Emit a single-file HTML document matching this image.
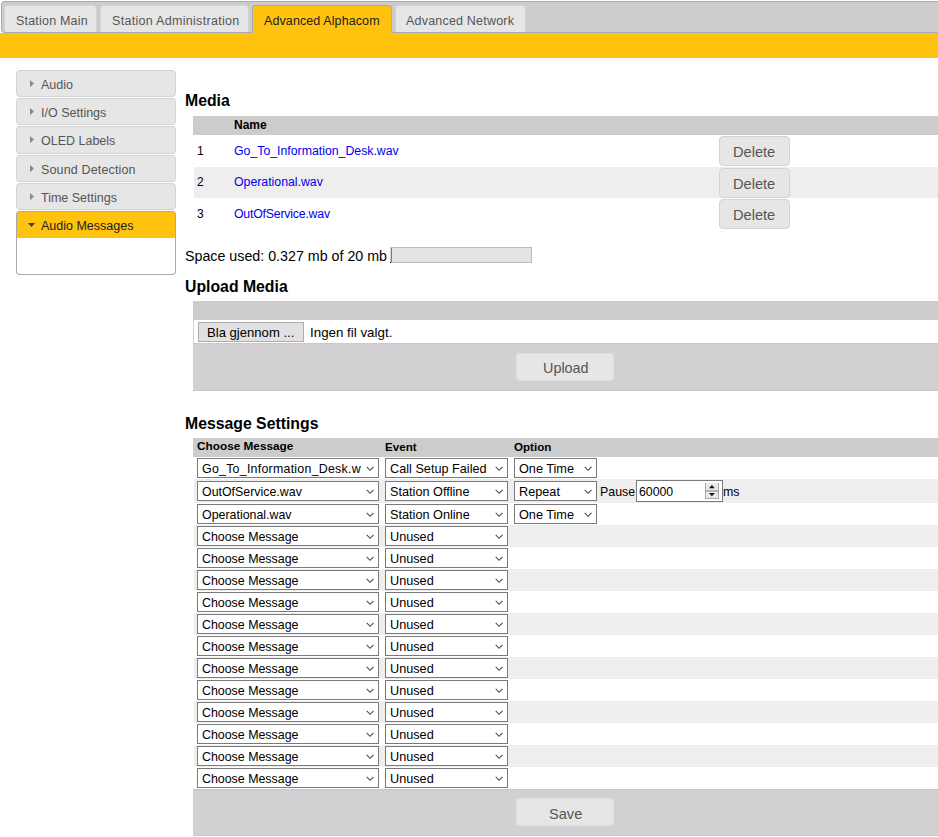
<!DOCTYPE html>
<html><head><meta charset="utf-8">
<style>
*{margin:0;padding:0;box-sizing:border-box}
html,body{width:938px;height:837px;overflow:hidden;background:#fff;font-family:"Liberation Sans",sans-serif;color:#000}
.a{position:absolute}
.t{position:absolute;white-space:nowrap;line-height:1}
#nav{left:1px;top:1px;width:960px;height:32px;background:#ccc;border:1px solid #aaa;border-bottom-color:#a6acb8;border-radius:4px}
.tab{position:absolute;top:5px;height:27px;background:#e6e6e6;border:1px solid #d3d3d3;border-bottom:0;border-radius:4px 4px 0 0;color:#555;font-size:12.5px;letter-spacing:.2px}
.tab span{position:absolute;top:9px;line-height:1;white-space:nowrap}
.tab.act{background:#ffc20f;border-color:#a6acb8;color:#212121;height:29px;border-radius:3px 3px 0 0}
#ybar{left:0;top:33px;width:938px;height:25px;background:#ffc20f}
.acc{position:absolute;left:16px;width:160px;height:27px;background:#e6e6e6;border:1px solid #d3d3d3;border-radius:4px;color:#555;font-size:12.5px}
.acc span{position:absolute;left:24px;top:8px;line-height:1;white-space:nowrap}
.acc svg{position:absolute;left:13px;top:9px}
.acc.act{background:#ffc20f;border-color:#aaa;border-bottom:0;color:#212121;border-radius:4px 4px 0 0}
.acc.act svg{left:11px;top:11px}
h2{position:absolute;font-size:15.8px;font-weight:bold;line-height:1;white-space:nowrap}
.btn{position:absolute;background:#e6e6e6;border:1px solid #d3d3d3;border-radius:4px;color:#555;font-size:14px}
.btn span{position:absolute;line-height:1;white-space:nowrap}
.sel{position:absolute;height:20px;background:#fff;border:1px solid #7a7a7a;color:#000;overflow:hidden}
.sel span{position:absolute;left:4px;top:4px;line-height:1;white-space:nowrap}
.sel svg{position:absolute;left:168px;top:7px}
.hd{position:absolute;left:193px;width:760px;background:#ccc}
.th{position:absolute;font-weight:bold;font-size:11.8px;line-height:1;white-space:nowrap}
.lnk{position:absolute;color:#0000ee;font-size:12.3px;line-height:1;white-space:nowrap}
.num{position:absolute;font-size:12px;line-height:1}
</style></head><body>
<div id="nav" class="a"></div>
<div class="tab" style="left:4px;width:93px"><span style="left:11px">Station Main</span></div>
<div class="tab" style="left:100px;width:149px"><span style="left:11px;letter-spacing:.3px">Station Administration</span></div>
<div class="tab act" style="left:252px;width:140px"><span style="left:11px;letter-spacing:.1px">Advanced Alphacom</span></div>
<div class="tab" style="left:395px;width:131px"><span style="left:10px">Advanced Network</span></div>
<div id="ybar" class="a"></div>

<div class="acc" style="top:70px"><svg width="5" height="8" viewBox="0 0 5 8"><path d="M0 0 L4 3.6 L0 7.2 Z" fill="#888"/></svg><span>Audio</span></div>
<div class="acc" style="top:98px"><svg width="5" height="8" viewBox="0 0 5 8"><path d="M0 0 L4 3.6 L0 7.2 Z" fill="#888"/></svg><span>I/O Settings</span></div>
<div class="acc" style="top:126px;height:28px"><svg width="5" height="8" viewBox="0 0 5 8"><path d="M0 0 L4 3.6 L0 7.2 Z" fill="#888"/></svg><span>OLED Labels</span></div>
<div class="acc" style="top:155px"><svg width="5" height="8" viewBox="0 0 5 8"><path d="M0 0 L4 3.6 L0 7.2 Z" fill="#888"/></svg><span style="letter-spacing:.15px">Sound Detection</span></div>
<div class="acc" style="top:183px"><svg width="5" height="8" viewBox="0 0 5 8"><path d="M0 0 L4 3.6 L0 7.2 Z" fill="#888"/></svg><span>Time Settings</span></div>
<div class="acc act" style="top:211px;height:27px"><svg width="8" height="5" viewBox="0 0 8 5"><path d="M0 0 L7 0 L3.5 4 Z" fill="#333b52"/></svg><span style="top:8px">Audio Messages</span></div>
<div class="a" style="left:16px;top:238px;width:160px;height:37px;border:1px solid #aaa;border-top:0;border-radius:0 0 4px 4px"></div>

<h2 style="left:185px;top:93px">Media</h2>
<div class="hd" style="top:116px;height:19px"></div>
<div class="th" style="left:234px;top:119px;font-size:12px">Name</div>
<div class="a" style="left:194px;top:167px;width:760px;height:31px;background:#eee"></div>
<div class="num" style="left:197px;top:145px">1</div>
<div class="num" style="left:197px;top:176px">2</div>
<div class="num" style="left:197px;top:208px">3</div>
<div class="lnk" style="left:234px;top:145px">Go_To_Information_Desk.wav</div>
<div class="lnk" style="left:234px;top:176px">Operational.wav</div>
<div class="lnk" style="left:234px;top:208px;letter-spacing:-.2px">OutOfService.wav</div>
<div class="btn" style="left:719px;top:136px;width:71px;height:30px"><span style="left:13px;top:8px;font-size:14.6px">Delete</span></div>
<div class="btn" style="left:719px;top:168px;width:71px;height:30px"><span style="left:13px;top:8px;font-size:14.6px">Delete</span></div>
<div class="btn" style="left:719px;top:199px;width:71px;height:30px"><span style="left:13px;top:8px;font-size:14.6px">Delete</span></div>

<div class="t" style="left:185px;top:249px;font-size:14.25px">Space used: 0.327 mb of 20 mb</div>
<div class="a" style="left:390px;top:247px;width:142px;height:16px;background:#e4e4e4;border:1px solid #bbb;border-left-color:#d8d4d8;border-radius:1px"></div>
<div class="a" style="left:391px;top:248px;width:1px;height:14px;background:#2b3"></div>
<div class="a" style="left:390px;top:262px;width:1px;height:1px;background:#000"></div>

<h2 style="left:185px;top:279px">Upload Media</h2>
<div class="a" style="left:193px;top:301px;width:760px;height:90px;background:#d3d0d3;border-bottom:1px solid #c8c8c8"></div>
<div class="a" style="left:193px;top:343px;width:760px;height:1px;background:#c9c9c9"></div>
<div class="a" style="left:193px;top:301px;width:760px;height:19px;background:#ccc"></div>
<div class="a" style="left:194px;top:320px;width:760px;height:23px;background:#fff"></div>
<div class="a" style="left:198px;top:322px;width:106px;height:20px;background:#e1e1e1;border:1px solid #adadad"></div>
<div class="t" style="left:207px;top:326px;font-size:13.1px">Bla gjennom ...</div>
<div class="t" style="left:310px;top:326px;font-size:13.35px">Ingen fil valgt.</div>
<div class="btn" style="left:516px;top:353px;width:98px;height:28px;border-color:#dfdfdf;border-radius:3px"><span style="left:26px;top:7px;font-size:14.4px">Upload</span></div>

<h2 style="left:185px;top:415.5px">Message Settings</h2>
<div class="hd" style="top:438px;height:19px"></div>
<div class="th" style="left:197px;top:441px">Choose Message</div>
<div class="th" style="left:385px;top:441px;font-size:11.6px">Event</div>
<div class="th" style="left:514px;top:441px;font-size:11.6px">Option</div>
<div class="a" style="left:194px;top:479px;width:760px;height:24px;background:#eee"></div>
<div class="a" style="left:194px;top:525px;width:760px;height:22px;background:#eee"></div>
<div class="a" style="left:194px;top:569px;width:760px;height:22px;background:#eee"></div>
<div class="a" style="left:194px;top:613px;width:760px;height:22px;background:#eee"></div>
<div class="a" style="left:194px;top:657px;width:760px;height:22px;background:#eee"></div>
<div class="a" style="left:194px;top:701px;width:760px;height:22px;background:#eee"></div>
<div class="a" style="left:194px;top:745px;width:760px;height:22px;background:#eee"></div>
<div class="sel" style="left:197px;top:458px;width:182px"><span style="font-size:12.4px"><b style="font-weight:normal;letter-spacing:.25px;display:block;width:159px;overflow:hidden;padding-bottom:4px">Go_To_Information_Desk.wav</b></span><svg style="left:168px" width="10" height="6" viewBox="0 0 10 6"><path d="M0.7 0.9 L4.1 4.3 L7.5 0.9" fill="none" stroke="#4a4a4a" stroke-width="1.1"/></svg></div>
<div class="sel" style="left:385px;top:458px;width:123px"><span style="font-size:12.7px">Call Setup Failed</span><svg style="left:109px" width="10" height="6" viewBox="0 0 10 6"><path d="M0.7 0.9 L4.1 4.3 L7.5 0.9" fill="none" stroke="#4a4a4a" stroke-width="1.1"/></svg></div>
<div class="sel" style="left:514px;top:458px;width:83px"><span style="font-size:12.7px">One Time</span><svg style="left:69px" width="10" height="6" viewBox="0 0 10 6"><path d="M0.7 0.9 L4.1 4.3 L7.5 0.9" fill="none" stroke="#4a4a4a" stroke-width="1.1"/></svg></div>
<div class="sel" style="left:197px;top:481px;width:182px"><span style="font-size:12.4px">OutOfService.wav</span><svg style="left:168px" width="10" height="6" viewBox="0 0 10 6"><path d="M0.7 0.9 L4.1 4.3 L7.5 0.9" fill="none" stroke="#4a4a4a" stroke-width="1.1"/></svg></div>
<div class="sel" style="left:385px;top:481px;width:123px"><span style="font-size:12.7px">Station Offline</span><svg style="left:109px" width="10" height="6" viewBox="0 0 10 6"><path d="M0.7 0.9 L4.1 4.3 L7.5 0.9" fill="none" stroke="#4a4a4a" stroke-width="1.1"/></svg></div>
<div class="sel" style="left:514px;top:481px;width:83px"><span style="font-size:12.7px">Repeat</span><svg style="left:69px" width="10" height="6" viewBox="0 0 10 6"><path d="M0.7 0.9 L4.1 4.3 L7.5 0.9" fill="none" stroke="#4a4a4a" stroke-width="1.1"/></svg></div>
<div class="sel" style="left:197px;top:504px;width:182px"><span style="font-size:12.4px">Operational.wav</span><svg style="left:168px" width="10" height="6" viewBox="0 0 10 6"><path d="M0.7 0.9 L4.1 4.3 L7.5 0.9" fill="none" stroke="#4a4a4a" stroke-width="1.1"/></svg></div>
<div class="sel" style="left:385px;top:504px;width:123px"><span style="font-size:12.7px">Station Online</span><svg style="left:109px" width="10" height="6" viewBox="0 0 10 6"><path d="M0.7 0.9 L4.1 4.3 L7.5 0.9" fill="none" stroke="#4a4a4a" stroke-width="1.1"/></svg></div>
<div class="sel" style="left:514px;top:504px;width:83px"><span style="font-size:12.7px">One Time</span><svg style="left:69px" width="10" height="6" viewBox="0 0 10 6"><path d="M0.7 0.9 L4.1 4.3 L7.5 0.9" fill="none" stroke="#4a4a4a" stroke-width="1.1"/></svg></div>
<div class="sel" style="left:197px;top:526px;width:182px"><span style="font-size:12.4px">Choose Message</span><svg style="left:168px" width="10" height="6" viewBox="0 0 10 6"><path d="M0.7 0.9 L4.1 4.3 L7.5 0.9" fill="none" stroke="#4a4a4a" stroke-width="1.1"/></svg></div>
<div class="sel" style="left:385px;top:526px;width:123px"><span style="font-size:12.7px">Unused</span><svg style="left:109px" width="10" height="6" viewBox="0 0 10 6"><path d="M0.7 0.9 L4.1 4.3 L7.5 0.9" fill="none" stroke="#4a4a4a" stroke-width="1.1"/></svg></div>
<div class="sel" style="left:197px;top:548px;width:182px"><span style="font-size:12.4px">Choose Message</span><svg style="left:168px" width="10" height="6" viewBox="0 0 10 6"><path d="M0.7 0.9 L4.1 4.3 L7.5 0.9" fill="none" stroke="#4a4a4a" stroke-width="1.1"/></svg></div>
<div class="sel" style="left:385px;top:548px;width:123px"><span style="font-size:12.7px">Unused</span><svg style="left:109px" width="10" height="6" viewBox="0 0 10 6"><path d="M0.7 0.9 L4.1 4.3 L7.5 0.9" fill="none" stroke="#4a4a4a" stroke-width="1.1"/></svg></div>
<div class="sel" style="left:197px;top:570px;width:182px"><span style="font-size:12.4px">Choose Message</span><svg style="left:168px" width="10" height="6" viewBox="0 0 10 6"><path d="M0.7 0.9 L4.1 4.3 L7.5 0.9" fill="none" stroke="#4a4a4a" stroke-width="1.1"/></svg></div>
<div class="sel" style="left:385px;top:570px;width:123px"><span style="font-size:12.7px">Unused</span><svg style="left:109px" width="10" height="6" viewBox="0 0 10 6"><path d="M0.7 0.9 L4.1 4.3 L7.5 0.9" fill="none" stroke="#4a4a4a" stroke-width="1.1"/></svg></div>
<div class="sel" style="left:197px;top:592px;width:182px"><span style="font-size:12.4px">Choose Message</span><svg style="left:168px" width="10" height="6" viewBox="0 0 10 6"><path d="M0.7 0.9 L4.1 4.3 L7.5 0.9" fill="none" stroke="#4a4a4a" stroke-width="1.1"/></svg></div>
<div class="sel" style="left:385px;top:592px;width:123px"><span style="font-size:12.7px">Unused</span><svg style="left:109px" width="10" height="6" viewBox="0 0 10 6"><path d="M0.7 0.9 L4.1 4.3 L7.5 0.9" fill="none" stroke="#4a4a4a" stroke-width="1.1"/></svg></div>
<div class="sel" style="left:197px;top:614px;width:182px"><span style="font-size:12.4px">Choose Message</span><svg style="left:168px" width="10" height="6" viewBox="0 0 10 6"><path d="M0.7 0.9 L4.1 4.3 L7.5 0.9" fill="none" stroke="#4a4a4a" stroke-width="1.1"/></svg></div>
<div class="sel" style="left:385px;top:614px;width:123px"><span style="font-size:12.7px">Unused</span><svg style="left:109px" width="10" height="6" viewBox="0 0 10 6"><path d="M0.7 0.9 L4.1 4.3 L7.5 0.9" fill="none" stroke="#4a4a4a" stroke-width="1.1"/></svg></div>
<div class="sel" style="left:197px;top:636px;width:182px"><span style="font-size:12.4px">Choose Message</span><svg style="left:168px" width="10" height="6" viewBox="0 0 10 6"><path d="M0.7 0.9 L4.1 4.3 L7.5 0.9" fill="none" stroke="#4a4a4a" stroke-width="1.1"/></svg></div>
<div class="sel" style="left:385px;top:636px;width:123px"><span style="font-size:12.7px">Unused</span><svg style="left:109px" width="10" height="6" viewBox="0 0 10 6"><path d="M0.7 0.9 L4.1 4.3 L7.5 0.9" fill="none" stroke="#4a4a4a" stroke-width="1.1"/></svg></div>
<div class="sel" style="left:197px;top:658px;width:182px"><span style="font-size:12.4px">Choose Message</span><svg style="left:168px" width="10" height="6" viewBox="0 0 10 6"><path d="M0.7 0.9 L4.1 4.3 L7.5 0.9" fill="none" stroke="#4a4a4a" stroke-width="1.1"/></svg></div>
<div class="sel" style="left:385px;top:658px;width:123px"><span style="font-size:12.7px">Unused</span><svg style="left:109px" width="10" height="6" viewBox="0 0 10 6"><path d="M0.7 0.9 L4.1 4.3 L7.5 0.9" fill="none" stroke="#4a4a4a" stroke-width="1.1"/></svg></div>
<div class="sel" style="left:197px;top:680px;width:182px"><span style="font-size:12.4px">Choose Message</span><svg style="left:168px" width="10" height="6" viewBox="0 0 10 6"><path d="M0.7 0.9 L4.1 4.3 L7.5 0.9" fill="none" stroke="#4a4a4a" stroke-width="1.1"/></svg></div>
<div class="sel" style="left:385px;top:680px;width:123px"><span style="font-size:12.7px">Unused</span><svg style="left:109px" width="10" height="6" viewBox="0 0 10 6"><path d="M0.7 0.9 L4.1 4.3 L7.5 0.9" fill="none" stroke="#4a4a4a" stroke-width="1.1"/></svg></div>
<div class="sel" style="left:197px;top:702px;width:182px"><span style="font-size:12.4px">Choose Message</span><svg style="left:168px" width="10" height="6" viewBox="0 0 10 6"><path d="M0.7 0.9 L4.1 4.3 L7.5 0.9" fill="none" stroke="#4a4a4a" stroke-width="1.1"/></svg></div>
<div class="sel" style="left:385px;top:702px;width:123px"><span style="font-size:12.7px">Unused</span><svg style="left:109px" width="10" height="6" viewBox="0 0 10 6"><path d="M0.7 0.9 L4.1 4.3 L7.5 0.9" fill="none" stroke="#4a4a4a" stroke-width="1.1"/></svg></div>
<div class="sel" style="left:197px;top:724px;width:182px"><span style="font-size:12.4px">Choose Message</span><svg style="left:168px" width="10" height="6" viewBox="0 0 10 6"><path d="M0.7 0.9 L4.1 4.3 L7.5 0.9" fill="none" stroke="#4a4a4a" stroke-width="1.1"/></svg></div>
<div class="sel" style="left:385px;top:724px;width:123px"><span style="font-size:12.7px">Unused</span><svg style="left:109px" width="10" height="6" viewBox="0 0 10 6"><path d="M0.7 0.9 L4.1 4.3 L7.5 0.9" fill="none" stroke="#4a4a4a" stroke-width="1.1"/></svg></div>
<div class="sel" style="left:197px;top:746px;width:182px"><span style="font-size:12.4px">Choose Message</span><svg style="left:168px" width="10" height="6" viewBox="0 0 10 6"><path d="M0.7 0.9 L4.1 4.3 L7.5 0.9" fill="none" stroke="#4a4a4a" stroke-width="1.1"/></svg></div>
<div class="sel" style="left:385px;top:746px;width:123px"><span style="font-size:12.7px">Unused</span><svg style="left:109px" width="10" height="6" viewBox="0 0 10 6"><path d="M0.7 0.9 L4.1 4.3 L7.5 0.9" fill="none" stroke="#4a4a4a" stroke-width="1.1"/></svg></div>
<div class="sel" style="left:197px;top:768px;width:182px"><span style="font-size:12.4px">Choose Message</span><svg style="left:168px" width="10" height="6" viewBox="0 0 10 6"><path d="M0.7 0.9 L4.1 4.3 L7.5 0.9" fill="none" stroke="#4a4a4a" stroke-width="1.1"/></svg></div>
<div class="sel" style="left:385px;top:768px;width:123px"><span style="font-size:12.7px">Unused</span><svg style="left:109px" width="10" height="6" viewBox="0 0 10 6"><path d="M0.7 0.9 L4.1 4.3 L7.5 0.9" fill="none" stroke="#4a4a4a" stroke-width="1.1"/></svg></div>
<div class="t" style="left:600px;top:486px;font-size:12.4px">Pause</div>
<div class="a" style="left:636px;top:480px;width:87px;height:22px;background:#fff;border:1px solid #7a7a7a"></div>
<div class="t" style="left:639px;top:486px;font-size:12.3px">60000</div>
<svg class="a" style="left:705px;top:483px" width="14" height="16" viewBox="0 0 14 16"><rect x="0" y="0" width="14" height="16" fill="#e9e9e9"/><path d="M0.5 0 V16 M13.5 0 V16 M0 15.5 H14" stroke="#a9a9a9" fill="none"/><rect x="1" y="7" width="12" height="2" fill="#b4b4b4"/><path d="M4 5.2 L6.9 2 L9.8 5.2 Z M4 10 L9.8 10 L6.9 13.2 Z" fill="#111"/></svg>
<div class="t" style="left:723px;top:486px;font-size:12.4px">ms</div>

<div class="a" style="left:193px;top:789px;width:760px;height:47px;background:#d3d0d3;border-top:1px solid #c8c8c8;border-bottom:1px solid #c8c8c8"></div>
<div class="btn" style="left:516px;top:798px;width:98px;height:28px;border-color:#dfdfdf;border-radius:3px"><span style="left:32px;top:8px;font-size:14.6px">Save</span></div>
</body></html>
